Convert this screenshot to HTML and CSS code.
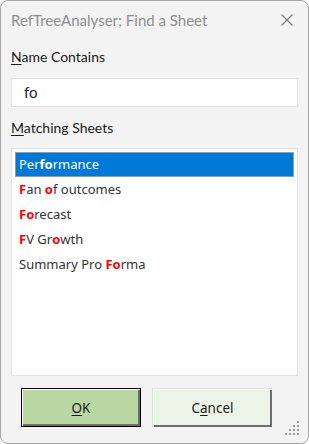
FILE: index.html
```html
<!DOCTYPE html>
<html>
<head>
<meta charset="utf-8">
<link rel="stylesheet" href="styles.css">
</head>
<body>
<div class="window">
  <div class="titlebar">
    <span class="title">RefTreeAnalyser; Find a Sheet</span>
    <svg class="close" width="12" height="12" viewBox="0 0 12 12"><path d="M0.5 0.5 L11.5 11.5 M11.5 0.5 L0.5 11.5" stroke="#7a7a7a" stroke-width="1.1" fill="none"/></svg>
  </div>
  <div class="content">
    <div class="label"><u>N</u>ame Contains</div>
    <div class="input">fo</div>
    <div class="label label2"><u>M</u>atching Sheets</div>
    <div class="list">
      <div class="item selected">Per<b>fo</b>rmance</div>
      <div class="item"><b class="hl">F</b>an <b class="hl">o</b>f outcomes</div>
      <div class="item"><b class="hl">Fo</b>recast</div>
      <div class="item"><b class="hl">F</b>V Gr<b class="hl">o</b>wth</div>
      <div class="item">Summary Pro <b class="hl">Fo</b>rma</div>
    </div>
    <div class="buttons">
      <div class="btn ok"><span><u>O</u>K</span></div>
      <div class="btn cancel"><span>C<u>a</u>ncel</span></div>
    </div>
  </div>
  <svg class="grip" width="14" height="14" viewBox="0 0 14 14" fill="#9a9a9a">
    <rect x="12" y="0" width="2" height="2"/>
    <rect x="8" y="4" width="2" height="2"/><rect x="12" y="4" width="2" height="2"/>
    <rect x="4" y="8" width="2" height="2"/><rect x="8" y="8" width="2" height="2"/><rect x="12" y="8" width="2" height="2"/>
    <rect x="0" y="12" width="2" height="2"/><rect x="4" y="12" width="2" height="2"/><rect x="8" y="12" width="2" height="2"/><rect x="12" y="12" width="2" height="2"/>
  </svg>
</div>
</body>
</html>
```
FILE: styles.css
```css
html, body {
  margin: 0;
  padding: 0;
  background: #ffffff;
}
.window {
  position: relative;
  box-sizing: border-box;
  width: 309px;
  height: 444px;
  background: #f3f3f3;
  border: 1px solid #a6a6a6;
  border-radius: 8px;
  overflow: hidden;
  font-family: "Noto Sans", "Open Sans", sans-serif;
}
.titlebar {
  height: 37px;
  display: flex;
  align-items: center;
  justify-content: space-between;
  padding: 0 15px 0 10px;
}
.title {
  font-family: "Lato", "Noto Sans", sans-serif;
  font-size: 15px;
  color: #8e8e8e;
}
.close {
  display: block;
}
.content {
  padding: 0 10px;
}
.label {
  margin-top: 10px;
  height: 18px;
  line-height: 18px;
  font-family: "Lato", "Noto Sans", sans-serif;
  font-size: 14px;
  color: #1a1a1a;
}
.label u {
  text-decoration-thickness: 1px;
  text-underline-offset: 2px;
}
.label2 {
  margin-top: 12px;
}
.input {
  margin-top: 12px;
  box-sizing: border-box;
  height: 29px;
  background: #ffffff;
  border: 1px solid #e3e3e3;
  padding-left: 12px;
  line-height: 26px;
  font-family: "Lato", "Noto Sans", sans-serif;
  font-size: 15px;
  color: #1c1c3a;
}
.list {
  margin-top: 11px;
  box-sizing: border-box;
  height: 228px;
  background: #ffffff;
  border: 1px solid #e3e3e3;
  padding: 3px;
}
.item {
  box-sizing: border-box;
  height: 25px;
  line-height: 23px;
  border: 1px solid transparent;
  padding-left: 3px;
  font-size: 13px;
  color: #333333;
}
.item b {
  font-weight: 700;
}
.item .hl {
  color: #ff0000;
}
.item.selected {
  background: #0078d7;
  border-color: #9a9a9a;
  color: #ffffff;
}
.buttons {
  margin-top: 12px;
  padding-left: 10px;
  display: flex;
  gap: 11px;
}
.btn {
  box-sizing: border-box;
  width: 120px;
  height: 39px;
  display: flex;
  align-items: center;
  justify-content: center;
  font-size: 13.5px;
  color: #1a1a1a;
}
.btn u {
  text-underline-offset: 2px;
}
.ok {
  background: #b8d7a2;
  border: 1px solid #000000;
  box-shadow: inset 1px 1px 0 #ffffff, inset -2px -2px 0 #6e6e6e;
}
.cancel {
  background: #ecf4e8;
  border-top: 1px solid #e0e0e0;
  border-left: 1px solid #e0e0e0;
  box-shadow: inset 1px 1px 0 #ffffff, inset -2px -2px 0 #6e6e6e;
}
.grip {
  position: absolute;
  right: 9px;
  bottom: 8px;
}
```
